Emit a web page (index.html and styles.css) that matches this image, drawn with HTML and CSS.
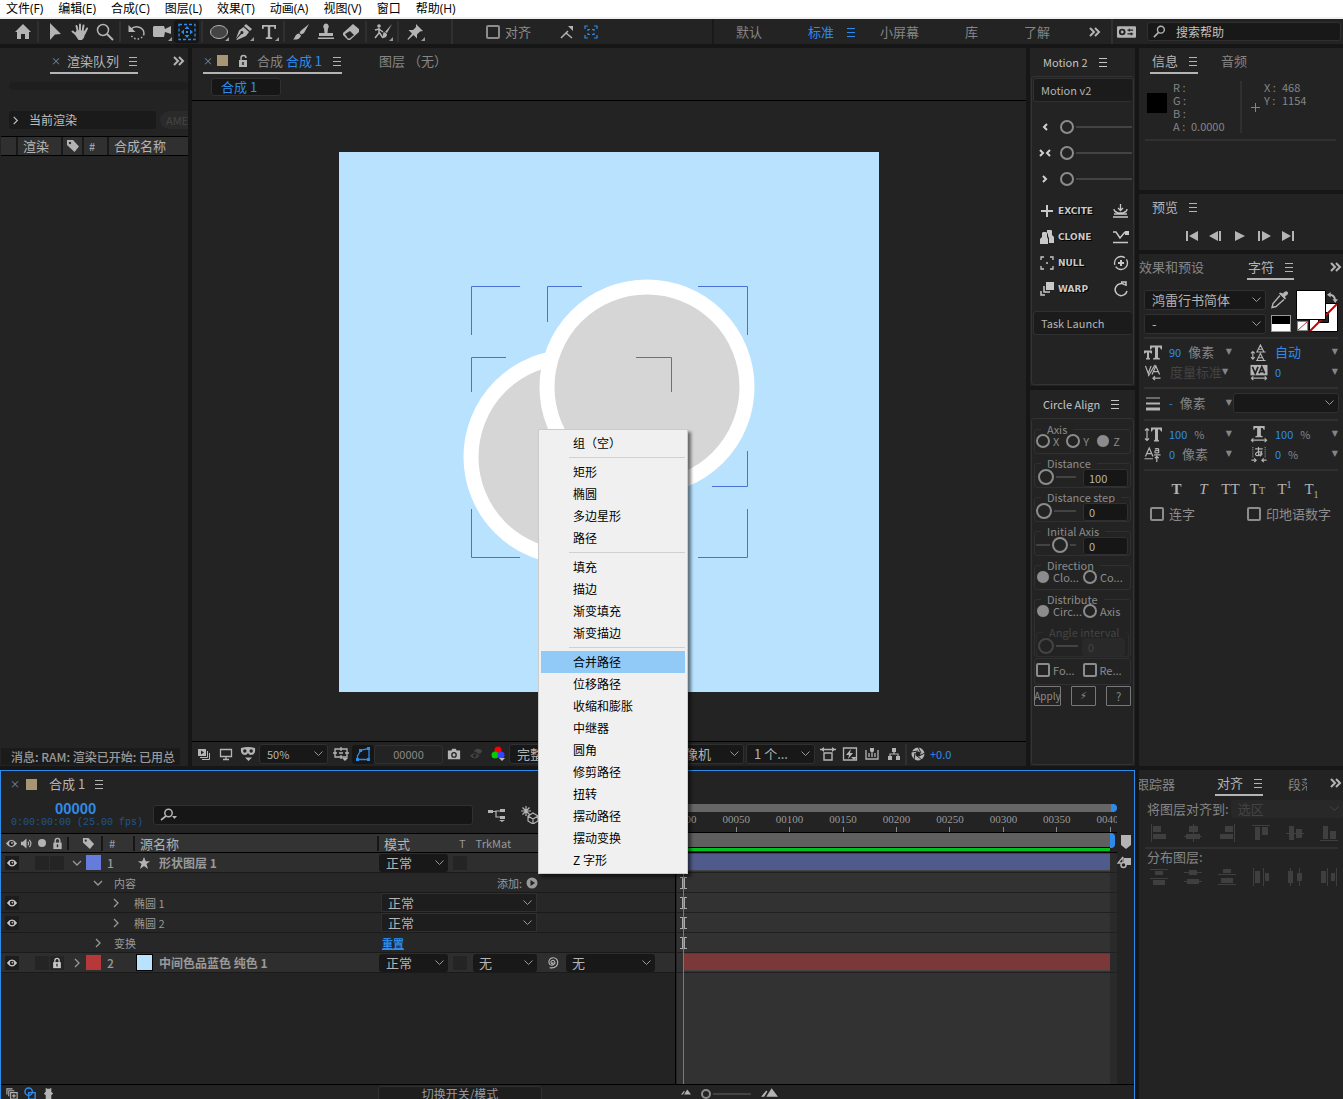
FILE: index.html
```html
<!DOCTYPE html>
<html lang="zh-CN">
<head>
<meta charset="utf-8">
<meta name="viewport" content="width=device-width, initial-scale=1">
<title>合成 1</title>
<link rel="stylesheet" href="styles.css">
</head>
<body>
<svg class="sprite" aria-hidden="true">
  <symbol id="home" viewBox="0 0 20 20"><path fill="currentColor" d="M10 2l8 8h-2v7h-4v-5H8v5H4v-7H2z"/></symbol>
  <symbol id="arrow" viewBox="0 0 20 20"><path fill="currentColor" d="M5 1l11 11-6 .5L5 18z"/></symbol>
  <symbol id="hand" viewBox="0 0 20 20"><path fill="none" stroke="currentColor" stroke-width="2" stroke-linecap="round" d="M6.500 4l1.500 6M10 2.500v7M13.500 3.500L12.500 10M17 6.500l-2.500 5M2.500 9.500L7 13"/><path fill="currentColor" d="M6.500 8.500h8l1 2-1.500 5-2 2.500H8.500L4.500 12z"/></symbol>
  <symbol id="zoom" viewBox="0 0 20 20"><circle cx="8" cy="8" r="5.500" fill="none" stroke="currentColor" stroke-width="1.500"/><path d="M12 12l6 6" stroke="currentColor" stroke-width="2"/></symbol>
  <symbol id="rotate" viewBox="0 0 20 20"><path fill="none" stroke="currentColor" stroke-width="1.500" d="M4 7a7.500 7 0 0 1 13 5"/><path fill="none" stroke="currentColor" stroke-width="1.500" stroke-dasharray="1.500 2" d="M17 12A7 7 0 0 1 4 13"/><path fill="currentColor" d="M1.500 3v7h7z"/></symbol>
  <symbol id="camera" viewBox="0 0 20 20"><path fill="currentColor" d="M2 4h10l1 3 6-3v8l-6-2-1 5H2l-1-1V5z"/></symbol>
  <symbol id="anchor" viewBox="0 0 20 20"><path fill="none" stroke="currentColor" stroke-width="1.300" stroke-dasharray="3 2" d="M2 2.500h16v15H2z"/><path fill="currentColor" d="M10 4l2.500 3h-5zM10 16l2.500-3h-5zM4 10l3-2.500v5zM16 10l-3-2.500v5z"/><path fill="currentColor" d="M9 9h2v2H9z"/></symbol>
  <symbol id="ellipse" viewBox="0 0 20 20"><ellipse cx="10" cy="10" rx="8.500" ry="6.500" fill="#444" stroke="currentColor"/></symbol>
  <symbol id="pen" viewBox="0 0 20 20"><path fill="currentColor" d="M12 2l6 5-2 2-6-5zM9.500 5l5.500 5-3 4-9 4-.7-.7L7.500 12a1.500 1.500 0 1 0-1-1L2 16.500l3-8z"/></symbol>
  <symbol id="type" viewBox="0 0 20 20"><path fill="currentColor" d="M3 3h14v4h-1.500L15 4.800h-3.800V15l2 .5V17H6.800v-1.500l2-.5V4.800H5L4.500 7H3z"/></symbol>
  <symbol id="brush" viewBox="0 0 20 20"><path fill="currentColor" d="M18 2l-5 9-2.500 1.500L8.500 11l1-2zM8 11.500l2 2C9 17 6 18 2 17.500 4 16.500 4 12 8 11.500z"/></symbol>
  <symbol id="stamp" viewBox="0 0 20 20"><path fill="currentColor" d="M10 1.500a3 3 0 0 1 2 5L11.500 11H17v3H3v-3h5.500L8 6.500a3 3 0 0 1 2-5zM2 15.500h16V17H2z"/></symbol>
  <symbol id="eraser" viewBox="0 0 20 20"><path fill="currentColor" d="M12 2l6 5v3l-9 8H7l-5-5v-2z"/><path fill="#232323" d="M4 12l5-3 4 4-4.500 3.500H7z"/></symbol>
  <symbol id="roto" viewBox="0 0 20 20"><circle cx="6" cy="4" r="1.800" fill="currentColor"/><path fill="none" stroke="currentColor" stroke-width="1.500" d="M6 6v5l-4 5M6 10l4 6M2 8l4-1 4 3"/><path fill="currentColor" d="M19 2l-5 9-2-1zM11 10l3 2c0 3-2 4-5 4 2-1 0-4 2-6z"/></symbol>
  <symbol id="pin" viewBox="0 0 20 20"><path fill="currentColor" d="M11 2l7 7-3 .5-3 3v4L8.500 13 3 18l-.5-1 4.500-5.500L3.500 8h4.500l3-3z"/></symbol>
  <symbol id="axis" viewBox="0 0 16 16"><path fill="none" stroke="currentColor" stroke-width="1.500" d="M2 14l5-5 6 5M7 9l2-2"/><path fill="currentColor" d="M9 2h5v5z"/></symbol>
  <symbol id="focus" viewBox="0 0 16 16"><path fill="none" stroke="currentColor" stroke-width="1.200" d="M2 5V2h3M11 2h3v3M14 11v3h-3M5 14H2v-3M5 7V5.500h2M9 5.500h2V7M11 9v1.500H9M7 10.500H5V9"/></symbol>
  <symbol id="menu" viewBox="0 0 10 10"><path fill="none" stroke="currentColor" d="M1 1.500h8M1 5.500h8M1 9.500h8"/></symbol>
  <symbol id="more" viewBox="0 0 12 10"><path fill="none" stroke="currentColor" stroke-width="2" d="M1 1l4 4-4 4M6 1l4 4-4 4"/></symbol>
  <symbol id="prefs" viewBox="0 0 20 12"><rect width="20" height="12" rx="1" fill="currentColor"/><circle cx="5.500" cy="6" r="2.500" fill="none" stroke="#232323" stroke-width="2"/><path stroke="#232323" stroke-width="1.300" d="M11 4h6M11 8h6M13 2.500v3M15 6.500v3"/></symbol>
  <symbol id="search" viewBox="0 0 14 14"><circle cx="8.500" cy="5" r="3.700" fill="none" stroke="currentColor" stroke-width="1.500"/><path d="M6 8l-5 5" stroke="currentColor" stroke-width="1.700"/></symbol>
  <symbol id="searchmenu" viewBox="0 0 18 14"><circle cx="8.500" cy="5" r="3.700" fill="none" stroke="currentColor" stroke-width="1.500"/><path d="M6 8l-5 4" stroke="currentColor" stroke-width="1.700"/><path fill="currentColor" d="M12 8h5l-2.500 3z"/></symbol>
  <symbol id="lock" viewBox="0 0 12 14"><path fill="none" stroke="currentColor" stroke-width="1.500" d="M3.500 7V4a2.500 2.500 0 0 1 5 0v3"/><path fill="currentColor" d="M1.500 6h9v7h-9z"/><path d="M6 8v3" stroke="#232323" stroke-width="1.500"/></symbol>
  <symbol id="unlock" viewBox="0 0 12 14"><path fill="none" stroke="currentColor" stroke-width="1.500" d="M4 7V4a2.500 2.500 0 0 1 5 0"/><path fill="currentColor" d="M2 6h8v7H2z"/><path d="M6 8v3" stroke="#232323" stroke-width="1.500"/></symbol>
  <symbol id="tag" viewBox="0 0 14 14"><path fill="currentColor" d="M1 1h6l6 6.500L8.500 13 1 6z"/><circle cx="4" cy="4" r="1.200" fill="#333"/></symbol>
  <symbol id="right" viewBox="0 0 10 10"><path fill="none" stroke="currentColor" stroke-width="1.300" d="M3 1l4 4-4 4"/></symbol>
  <symbol id="down" viewBox="0 0 10 10"><path fill="none" stroke="currentColor" stroke-width="1.300" d="M1 3l4 4 4-4"/></symbol>
  <symbol id="eye" viewBox="0 0 14 10"><path fill="currentColor" d="M1 5q6-8 12 0-6 8-12 0z"/><circle cx="7" cy="5" r="2.600" fill="#1d1d1d"/><circle cx="7.500" cy="4.500" r="1" fill="currentColor"/></symbol>
  <symbol id="ghost" viewBox="0 0 16 14"><path fill="currentColor" d="M1 9q5-6 11 0-5 6-11 0zM6 3q4-4 9 0-1 4-4 4-2-3-5-3z"/><circle cx="6.500" cy="9" r="2" fill="#232323"/></symbol>
  <symbol id="sound" viewBox="0 0 14 12"><path fill="currentColor" d="M1 4h2l4-3.500v11L3 8H1z"/><path fill="none" stroke="currentColor" stroke-width="1.200" d="M8.500 4q1.500 2 0 4M10 2q3.500 4 0 8"/></symbol>
  <symbol id="frames" viewBox="0 0 14 14"><path fill="currentColor" d="M1 2h8v7H1z"/><path fill="#232323" d="M4 3.500L7 5.500 4 7.500z"/><path fill="none" stroke="currentColor" d="M3 10.500h7.500V4M5 12.500h7.500V6"/></symbol>
  <symbol id="screen" viewBox="0 0 14 14"><path fill="none" stroke="currentColor" stroke-width="1.300" d="M1.500 2.500h11v7h-11zM7 10v2M4 12.500h6"/></symbol>
  <symbol id="mask" viewBox="0 0 16 16"><path fill="currentColor" d="M1 2q7-2 14 0 1 7-4 7-2 0-3-2-1 2-3 2-5 0-4-7zM5 11.500h7L8.500 15z"/><circle cx="4.800" cy="5" r="1.700" fill="#232323"/><circle cx="11.200" cy="5" r="1.700" fill="#232323"/></symbol>
  <symbol id="grid" viewBox="0 0 16 16"><path fill="none" stroke="currentColor" stroke-width="1.300" d="M2 3h12v8H2zM8 1v4M8 9v4M0 7h4M12 7h4M6 7h4"/><path fill="currentColor" d="M9 12h6l-3 3z"/></symbol>
  <symbol id="region" viewBox="0 0 16 16"><path fill="none" stroke="currentColor" stroke-width="1.300" d="M2.500 13.500V10L6 4l8-1.500v11z"/><path fill="currentColor" d="M1 12h3v3H1zM12 12h3v3h-3zM12 1h3v3h-3zM4 3h3v3H4z"/></symbol>
  <symbol id="snapshot" viewBox="0 0 16 14"><path fill="currentColor" d="M1 3h4l1-2h4l1 2h4v10H1z"/><circle cx="8" cy="8" r="2.500" fill="none" stroke="#232323" stroke-width="1.500"/></symbol>
  <symbol id="rgb" viewBox="0 0 14 16"><circle cx="7" cy="4" r="3.500" fill="#f00"/><circle cx="4" cy="9" r="3.500" fill="#0c0"/><circle cx="10" cy="9" r="3.500" fill="#34f"/><path fill="#bbb" d="M8 12h6l-3 3z"/></symbol>
  <symbol id="aspect" viewBox="0 0 16 14"><path fill="none" stroke="currentColor" stroke-width="1.400" d="M0 2.500h16M4 6h8v7H4z"/><path fill="currentColor" d="M4 0v5L1 2.500zM12 0v5l3-2.500z"/></symbol>
  <symbol id="fast" viewBox="0 0 16 14"><path fill="none" stroke="currentColor" stroke-width="1.300" d="M1.500 1h13v12h-13z"/><path fill="currentColor" d="M9 2L4 8h3l-1 4 5-6H8zM9 10h6l-3 3z"/></symbol>
  <symbol id="timeicon" viewBox="0 0 14 14"><path fill="none" stroke="currentColor" stroke-width="1.300" d="M1 3v9h12V3M4 6v4M7 6v4M10 6v4"/><path fill="currentColor" d="M5 1h4v3l-2 2-2-2z"/></symbol>
  <symbol id="flow" viewBox="0 0 14 14"><path fill="currentColor" d="M5 1h4v4H5zM1 9h4v4H1zM9 9h4v4H9z"/><path fill="none" stroke="currentColor" stroke-width="1.200" d="M7 5v2M3 9V7h8v2"/></symbol>
  <symbol id="shutter" viewBox="0 0 14 14"><circle cx="7" cy="7" r="4.500" fill="none" stroke="currentColor" stroke-width="4"/><path stroke="#232323" d="M7 0l3 6M14 6l-6 3M11 13L6 9M3 13l1-7M0 5l7-1"/></symbol>
  <symbol id="ease" viewBox="0 0 18 16"><path fill="none" stroke="currentColor" stroke-width="1.300" d="M1 14h15M2 11h13M8.500 1v6M6 5l2.500 2.500L11 5M3 8q5.500 5 11 0M2 6q0 4 6.500 4T15 6"/></symbol>
  <symbol id="bounce" viewBox="0 0 18 16"><path fill="none" stroke="currentColor" stroke-width="1.500" d="M1 3h3l4 6 5-6M1 13.500h15"/><path fill="currentColor" d="M13 2h4v4h-4z"/></symbol>
  <symbol id="orbit" viewBox="0 0 18 16"><circle cx="9" cy="8" r="6.500" fill="none" stroke="currentColor" stroke-width="1.300" stroke-dasharray="16 2"/><path stroke="currentColor" stroke-width="2" d="M9 5v6M6 8h6"/></symbol>
  <symbol id="spin" viewBox="0 0 18 16"><path fill="none" stroke="currentColor" stroke-width="1.500" d="M13 4a6 6 0 1 0 2 6M9 1h5v4"/></symbol>
  <symbol id="plus" viewBox="0 0 14 14"><path stroke="currentColor" stroke-width="2" d="M7 1v12M1 7h12"/></symbol>
  <symbol id="cross" viewBox="0 0 10 10"><path stroke="currentColor" d="M4.500 0v9M0 4.500h9"/></symbol>
  <symbol id="clone" viewBox="0 0 14 14"><path fill="currentColor" d="M7 0h4q1 0 1 1v4l2 2v6H9V8L8 6V4L7 3z"/><path fill="currentColor" d="M3 2h3l1 1v4l1 2v5H0V9l2-2V3z"/></symbol>
  <symbol id="null" viewBox="0 0 14 14"><path fill="none" stroke="currentColor" stroke-width="1.300" d="M1 4V1h3M10 1h3v3M13 10v3h-3M4 13H1v-3M6 7h2"/></symbol>
  <symbol id="warp" viewBox="0 0 14 14"><path fill="currentColor" d="M6 0h8v8H6z"/><path fill="none" stroke="currentColor" stroke-width="1.500" d="M4 4v6h6M1 9v4h4"/></symbol>
  <symbol id="inL" viewBox="0 0 12 12"><path fill="none" stroke="currentColor" stroke-width="2" d="M8 3L5 6l3 3"/></symbol>
  <symbol id="inM" viewBox="0 0 12 12"><path fill="none" stroke="currentColor" stroke-width="2" d="M1 3l3 3-3 3M11 3L8 6l3 3"/></symbol>
  <symbol id="inR" viewBox="0 0 12 12"><path fill="none" stroke="currentColor" stroke-width="2" d="M4 3l3 3-3 3"/></symbol>
  <symbol id="first" viewBox="0 0 14 10"><path fill="currentColor" d="M1 0h2v10H1zM13 0v10L4 5z"/></symbol>
  <symbol id="prev" viewBox="0 0 14 10"><path fill="currentColor" d="M10 0h2v10h-2zM9 0v10L0 5z"/></symbol>
  <symbol id="play" viewBox="0 0 14 10"><path fill="currentColor" d="M2 0l10 5-10 5z"/></symbol>
  <symbol id="next" viewBox="0 0 14 10"><path fill="currentColor" d="M1 0h2v10H1zM5 0l9 5-9 5z"/></symbol>
  <symbol id="last" viewBox="0 0 14 10"><path fill="currentColor" d="M11 0h2v10h-2zM1 0l9 5-9 5z"/></symbol>
  <symbol id="dropper" viewBox="0 0 18 18"><path fill="currentColor" d="M12 3q3-4 5-1 1 2-3 4l1 2-1 1-6-6 1-1z"/><path fill="none" stroke="currentColor" stroke-width="1.400" d="M9 5l-7 8-1 4 4-1 8-7"/></symbol>
  <symbol id="swap" viewBox="0 0 12 12"><path fill="none" stroke="currentColor" stroke-width="2" d="M3 3q5 0 6 6"/><path fill="currentColor" d="M4 0v6L0 3zM6 8h6l-3 4z"/></symbol>
  <symbol id="size" viewBox="0 0 18 16"><path fill="currentColor" d="M6 1h12v4h-1l-1-2h-2v10l2 1v1H9v-1l2-1V3H8L7 5H6zM0 6h8v3H7L6 8H5v5l1 1v1H2v-1l1-1V8H2L1 9H0z"/></symbol>
  <symbol id="leading" viewBox="0 0 18 18"><path fill="none" stroke="currentColor" stroke-width="1.200" d="M7 8l3.500-7L14 8M8.500 5.500h4M7 17l3.500-7L14 17M8.500 14.500h4M6 8.500h10M6 17.500h10M2.500 8v8M.500 10l2-2 2 2M.500 14l2 2 2-2"/></symbol>
  <symbol id="kern" viewBox="0 0 18 18"><path fill="none" stroke="currentColor" stroke-width="1.300" d="M1 2l3 8 3-8M4 13L11 1M8 11l4-9 4 9M10 8h5M9 15h8M11 13l-2 2 2 2"/></symbol>
  <symbol id="track" viewBox="0 0 18 18"><path fill="currentColor" d="M0 1h18v11H0z"/><path fill="none" stroke="#232323" stroke-width="1.800" d="M2 3l3 7 3-7M9 10l3-7 3 7M10 8h5"/><path fill="none" stroke="currentColor" stroke-width="1.200" d="M1 15h16M3 13l-2 2 2 2M15 13l2 2-2 2"/></symbol>
  <symbol id="lines" viewBox="0 0 18 16"><path fill="currentColor" d="M2 2h14v1H2zM2 7h14v2H2zM2 12h14v3H2z"/></symbol>
  <symbol id="vscale" viewBox="0 0 18 16"><path fill="currentColor" d="M7 1h11v4h-1l-1-2h-2v10l1 1v1h-5v-1l1-1V3H9L8 5H7z"/><path fill="none" stroke="currentColor" stroke-width="1.200" d="M3 2v12M1 4l2-2 2 2M1 12l2 2 2-2"/></symbol>
  <symbol id="hscale" viewBox="0 0 18 18"><path fill="currentColor" d="M3 0h12v4h-1l-1-2h-2v8l2 1v1H5v-1l2-1V2H5L4 4H3z"/><path fill="none" stroke="currentColor" stroke-width="1.200" d="M1 15h16M3 13l-2 2 2 2M15 13l2 2-2 2"/></symbol>
  <symbol id="baseline" viewBox="0 0 18 18"><path fill="none" stroke="currentColor" stroke-width="1.300" d="M1 11l4-9 4 9M3 8h5M0 13.500h9M11 3q4-1 4 1v3q-4 1-4-1t4-1M10 9.500h7M13 17v-6M11 13l2-2 2 2"/></symbol>
  <symbol id="tsume" viewBox="0 0 18 18"><path fill="none" stroke="currentColor" stroke-dasharray="1 1" d="M2.500 1v11M15.500 1v11"/><path fill="none" stroke="currentColor" stroke-width="1.200" d="M5 3h8M8.500 1v9M12 5q-1 6-6 5-2-2 2-4 5 0 4 3l-2 2M1 15h5M4 13l2 2-2 2M17 15h-5M14 13l-2 2 2 2"/></symbol>
  <symbol id="tree" viewBox="0 0 18 14"><path fill="currentColor" d="M0 2h5v3H0zM12 1h5v3h-5zM12 8h5v3h-5zM11 12h6l-3 2z"/><path fill="none" stroke="currentColor" stroke-width="1.200" d="M4 3.500h4M12 3H8v6h4"/></symbol>
  <symbol id="draft" viewBox="0 0 18 18"><path fill="none" stroke="currentColor" stroke-width="1.200" d="M5 0v10M0 5h10M1.500 1.500l7 7M8.500 1.500l-7 7M7 10l5-3 5 3v5l-5 3-5-3zM7 10l5 3 5-3M12 13v5"/></symbol>
  <symbol id="star" viewBox="0 0 14 14"><path fill="currentColor" d="M7 1l1.700 4.300H13L9.500 8l1.500 5-4-3-4 3 1.500-5L1 5.300h4.300z"/></symbol>
  <symbol id="add" viewBox="0 0 12 12"><circle cx="6" cy="6" r="5.500" fill="currentColor"/><path fill="#232323" d="M4.500 3L9 6l-4.500 3z"/></symbol>
  <symbol id="spiral" viewBox="0 0 14 14"><path fill="none" stroke="currentColor" stroke-width="1.200" d="M8 7q-2 2-2.500 0T7.500 4.500Q10 5 9.500 8 7 11 4 9 2 6 4.500 3 8 .5 11.500 3.500q2.500 4-.5 7.500-3 2.500-7 1.500"/></symbol>
  <symbol id="marker" viewBox="0 0 12 14"><path fill="currentColor" d="M1 0h10v10l-5 4-5-4z"/></symbol>
  <symbol id="graph" viewBox="0 0 14 14"><path fill="currentColor" d="M7 2h7v7H7z"/><path fill="none" stroke="currentColor" stroke-width="1.300" d="M6 1L1 7h3M6 1v8"/><circle cx="6.500" cy="9" r="2.500" fill="#232323" stroke="currentColor" stroke-width="1.500"/></symbol>
  <symbol id="ibeam" viewBox="0 0 9 12"><path fill="none" stroke="currentColor" d="M1 .5h7M1 11.500h7M3.500 1v10M5.500 1v10"/></symbol>
  <symbol id="stack" viewBox="0 0 14 14"><path fill="none" stroke="currentColor" stroke-width="1.200" d="M1 8V2h6M3 10V4h6M5 6h7v7H5zM8.500 7.500v4M6.500 9.500h4"/></symbol>
  <symbol id="shapes" viewBox="0 0 14 14"><circle cx="5" cy="5" r="4" fill="none" stroke="currentColor" stroke-width="1.500"/><path fill="none" stroke="currentColor" stroke-width="1.500" d="M5 6h7v7H5z"/></symbol>
  <symbol id="braces" viewBox="0 0 14 14"><path fill="currentColor" d="M5 1H4v4L2 7l2 2v4h1zM9 1h1v4l2 2-2 2v4H9zM5 2h4v11H5z"/></symbol>
  <symbol id="hills" viewBox="0 0 16 10"><path fill="currentColor" d="M5 9l5-8 6 8zM0 9l5-6 1 1-3 5z"/></symbol>
  <symbol id="alL" viewBox="0 0 18 18"><path fill="currentColor" d="M1 0h1v18H1zM3 2h8v6H3zM3 10h13v5H3z"/></symbol>
  <symbol id="alC" viewBox="0 0 18 18"><path fill="currentColor" d="M9 0h1v18H9zM5 2h9v6H5zM2 10h14v5H2zM0 12h18v1H0z"/></symbol>
  <symbol id="alR" viewBox="0 0 18 18"><path fill="currentColor" d="M16 0h1v18h-1zM7 2h8v6H7zM2 10h13v5H2z"/></symbol>
  <symbol id="alT" viewBox="0 0 18 18"><path fill="currentColor" d="M0 1h18v1H0zM3 3h5v13H3zM10 3h6v8h-6z"/></symbol>
  <symbol id="alM" viewBox="0 0 18 18"><path fill="currentColor" d="M0 9h18v1H0zM3 2h5v14H3zM10 5h6v9h-6z"/></symbol>
  <symbol id="alB" viewBox="0 0 18 18"><path fill="currentColor" d="M0 16h18v1H0zM3 2h5v13H3zM10 7h6v8h-6z"/></symbol>
  <symbol id="diT" viewBox="0 0 18 18"><path fill="currentColor" d="M0 1h18v1H0zM5 3h8v4H5zM0 10h18v1H0zM3 12h12v5H3z"/></symbol>
  <symbol id="diC" viewBox="0 0 18 18"><path fill="currentColor" d="M0 4h18v1H0zM5 2h8v5H5zM0 13h18v1H0zM3 11h12v5H3z"/></symbol>
  <symbol id="diB" viewBox="0 0 18 18"><path fill="currentColor" d="M0 6h18v1H0zM5 1h8v4H5zM0 16h18v1H0zM3 10h12v5H3z"/></symbol>
  <symbol id="dhL" viewBox="0 0 18 18"><path fill="currentColor" d="M1 0h1v18H1zM3 3h5v12H3zM11 0h1v18h-1zM13 5h4v8h-4z"/></symbol>
  <symbol id="dhC" viewBox="0 0 18 18"><path fill="currentColor" d="M4 0h1v18H4zM2 3h5v12H2zM13 0h1v18h-1zM11 5h5v8h-5z"/></symbol>
  <symbol id="dhR" viewBox="0 0 18 18"><path fill="currentColor" d="M7 0h1v18H7zM1 3h5v12H1zM16 0h1v18h-1zM11 5h4v8h-4z"/></symbol>
</svg>

<nav class="menubar" aria-label="主菜单">
  <button>文件(F)</button><button>编辑(E)</button><button>合成(C)</button><button>图层(L)</button><button>效果(T)</button><button>动画(A)</button><button>视图(V)</button><button>窗口</button><button>帮助(H)</button>
</nav>

<header class="toolbar">
  <div class="tools">
    <button class="tool" aria-label="主页"><svg><use href="#home"/></svg></button><i class="sep"></i>
    <button class="tool" aria-label="选取"><svg><use href="#arrow"/></svg></button>
    <button class="tool" aria-label="手形"><svg><use href="#hand"/></svg></button>
    <button class="tool" aria-label="缩放"><svg><use href="#zoom"/></svg></button><i class="sep"></i>
    <button class="tool" aria-label="旋转"><svg><use href="#rotate"/></svg></button>
    <button class="tool corner" aria-label="摄像机"><svg><use href="#camera"/></svg></button>
    <button class="tool active" aria-label="锚点"><svg><use href="#anchor"/></svg></button><i class="sep"></i>
    <button class="tool corner" aria-label="椭圆"><svg><use href="#ellipse"/></svg></button>
    <button class="tool corner" aria-label="钢笔"><svg><use href="#pen"/></svg></button>
    <button class="tool corner" aria-label="文字"><svg><use href="#type"/></svg></button><i class="sep"></i>
    <button class="tool" aria-label="画笔"><svg><use href="#brush"/></svg></button>
    <button class="tool" aria-label="仿制图章"><svg><use href="#stamp"/></svg></button>
    <button class="tool" aria-label="橡皮擦"><svg><use href="#eraser"/></svg></button><i class="sep"></i>
    <button class="tool corner" aria-label="Roto 笔刷"><svg><use href="#roto"/></svg></button><i class="sep"></i>
    <button class="tool corner" aria-label="人偶位控点"><svg><use href="#pin"/></svg></button>
  </div>
  <div class="snap">
    <label class="check"><input type="checkbox">对齐</label>
    <button class="ico16" aria-label="轴"><svg><use href="#axis"/></svg></button>
    <button class="ico16 blue" aria-label="边界"><svg><use href="#focus"/></svg></button>
  </div>
  <div class="spaces">
    <button>默认</button>
    <button class="blue">标准<svg class="burger"><use href="#menu"/></svg></button>
    <button>小屏幕</button>
    <button>库</button>
    <button>了解</button>
    <button class="light" aria-label="更多"><svg class="more"><use href="#more"/></svg></button>
  </div>
  <button class="prefs" aria-label="工作区设置"><svg><use href="#prefs"/></svg></button>
  <label class="help"><svg><use href="#search"/></svg><input type="text" placeholder="搜索帮助" aria-label="搜索帮助"></label>
</header>

<main class="workspace">
  <div class="main">
    <div class="upper">
      <section class="panel queue">
        <div class="tabs">
          <div class="tab on"><span class="x">×</span><span>渲染队列</span><svg class="burger"><use href="#menu"/></svg></div>
          <svg class="more"><use href="#more"/></svg>
        </div>
        <div class="progress"></div>
        <div class="current"><button class="now"><svg><use href="#right"/></svg>当前渲染</button><button class="ame" disabled>AME</button></div>
        <table class="qtable"><thead><tr><td class="c0"></td><th class="c1">渲染</th><th class="c2"><svg><use href="#tag"/></svg></th><th class="c3">#</th><th>合成名称</th></tr></thead></table>
        <div class="message">消息: RAM: 渲染已开始: 已用总</div>
      </section>

      <section class="panel comp">
        <div class="tabs">
          <div class="tab on"><span class="x">×</span><i class="sw tan"></i><svg class="ulock"><use href="#unlock"/></svg><span class="dim">合成 <b>合成 1</b></span><svg class="burger"><use href="#menu"/></svg></div>
          <div class="tab dim">图层 （无）</div>
        </div>
        <div class="crumb"><button>合成 1</button></div>
        <div class="viewer">
          <svg class="stage" viewBox="0 0 540 540">
            <path fill="#b9e2ff" d="M0 0h540v540H0z"/>
            <g fill="#d6d6d6" stroke="#fff" stroke-width="15"><circle cx="232" cy="305" r="100"/><circle cx="308" cy="235" r="100"/></g>
            <path fill="none" stroke="#4873d4" d="M132.500 183v-48.500H181M359 134.500h49.500V183M408.500 357v48.500H359M181 405.500h-48.500V357M208.500 170v-35.500H243M408.500 299v35.500H373M132.500 240v-34.500H167M297 205.500h35.500V240"/>
          </svg>
        </div>
        <div class="viewbar">
          <button aria-label="始终预览"><svg><use href="#frames"/></svg></button>
          <button aria-label="主视图"><svg><use href="#screen"/></svg></button>
          <button aria-label="蒙版"><svg class="w16"><use href="#mask"/></svg></button>
          <select class="w69 num-sel" aria-label="放大率"><option>50%</option></select>
          <button aria-label="网格"><svg class="w16"><use href="#grid"/></svg></button>
          <button class="boxed blue" aria-label="目标区域"><svg class="w16"><use href="#region"/></svg></button>
          <button class="frame">00000</button>
          <button aria-label="快照"><svg><use href="#snapshot"/></svg></button>
          <button class="faint" aria-label="显示快照"><svg><use href="#ghost"/></svg></button>
          <button aria-label="通道"><svg class="w16"><use href="#rgb"/></svg></button>
          <select class="wres" aria-label="分辨率"><option>完整</option></select>
          <select class="wcam" aria-label="3D 视图"><option>活动摄像机</option></select>
          <select class="w69" aria-label="视图布局"><option>1 个...</option></select>
          <button aria-label="像素长宽比"><svg class="w16"><use href="#aspect"/></svg></button>
          <button aria-label="快速预览"><svg class="w16"><use href="#fast"/></svg></button>
          <button aria-label="时间轴"><svg><use href="#timeicon"/></svg></button>
          <button aria-label="流程图"><svg><use href="#flow"/></svg></button>
          <i class="sep"></i>
          <button aria-label="曝光"><svg><use href="#shutter"/></svg></button>
          <span class="expo">+0.0</span>
        </div>
      </section>

      <div class="scripts">
        <section class="panel motion">
          <h2>Motion 2<svg class="burger"><use href="#menu"/></svg></h2>
          <div class="group">
            <button class="bar">Motion v2</button>
            <label class="slide"><svg><use href="#inL"/></svg><input type="range" value="0" aria-label="缓入"></label>
            <label class="slide"><svg><use href="#inM"/></svg><input type="range" value="0" aria-label="缓动"></label>
            <label class="slide"><svg><use href="#inR"/></svg><input type="range" value="0" aria-label="缓出"></label>
            <div class="acts">
              <button><svg><use href="#plus"/></svg>EXCITE</button><button aria-label="混合"><svg class="wide"><use href="#ease"/></svg></button>
              <button><svg><use href="#clone"/></svg>CLONE</button><button aria-label="跳跃"><svg class="wide"><use href="#bounce"/></svg></button>
              <button><svg><use href="#null"/></svg>NULL</button><button aria-label="轨道"><svg class="wide"><use href="#orbit"/></svg></button>
              <button><svg><use href="#warp"/></svg>WARP</button><button aria-label="旋转"><svg class="wide"><use href="#spin"/></svg></button>
            </div>
            <button class="bar">Task Launch</button>
          </div>
        </section>
        <section class="panel align-circle">
          <h2>Circle Align<svg class="burger"><use href="#menu"/></svg></h2>
          <div class="group">
            <fieldset><legend>Axis</legend><label><input type="radio" name="ax">X</label><label><input type="radio" name="ax">Y</label><label><input type="radio" name="ax" checked>Z</label></fieldset>
            <fieldset><legend>Distance</legend><input type="range" value="10" aria-label="Distance"><input type="text" value="100" aria-label="Distance"></fieldset>
            <fieldset><legend>Distance step</legend><input type="range" value="0" aria-label="Distance step"><input type="text" value="0" aria-label="Distance step"></fieldset>
            <fieldset><legend>Initial Axis</legend><input type="range" value="65" aria-label="Initial Axis"><input type="text" value="0" aria-label="Initial Axis"></fieldset>
            <fieldset class="two"><legend>Direction</legend><label><input type="radio" name="dir" checked>Clo...</label><label><input type="radio" name="dir">Co...</label></fieldset>
            <fieldset class="two tall"><legend>Distribute</legend><label><input type="radio" name="dis" checked>Circ...</label><label><input type="radio" name="dis">Axis</label>
              <fieldset class="inner" disabled><legend>Angle interval</legend><input type="range" value="0" aria-label="Angle interval"><input type="text" value="0" aria-label="Angle interval"></fieldset>
            </fieldset>
            <div class="pair"><label><input type="checkbox">Fo...</label><label><input type="checkbox">Re...</label></div>
            <div class="go"><button>Apply</button><button class="sym">⚡&#xFE0E;</button><button>?</button></div>
          </div>
        </section>
      </div>
    </div>

    <section class="timeline">
      <div class="tbody">
        <div class="tleft">
          <div class="ttab"><span class="x">×</span><i class="sw tan"></i><span>合成 1</span><svg class="burger"><use href="#menu"/></svg></div>
          <div class="ttop">
            <div class="time"><strong>00000</strong><small>0:00:00:00 (25.00 fps)</small></div>
            <label class="tsearch"><svg><use href="#searchmenu"/></svg><input type="text" aria-label="搜索图层"></label>
            <button class="i18" aria-label="微型流程图"><svg><use href="#tree"/></svg></button>
            <button class="i18" aria-label="草图 3D"><svg><use href="#draft"/></svg></button>
          </div>
          <div class="row head">
            <span class="av"><svg><use href="#eye"/></svg><svg><use href="#sound"/></svg><i class="dot"></i><svg><use href="#lock"/></svg></span>
            <span class="htag"><svg><use href="#tag"/></svg></span><span class="num bl">#</span><span class="hname bl">源名称</span><span class="bl">模式</span><span class="tcol">T</span><span>TrkMat</span>
          </div>
          <div class="row layer">
            <span class="av"><i class="cell"><svg><use href="#eye"/></svg></i><i class="cell off"></i><i class="cell"></i></span>
            <svg class="tw"><use href="#down"/></svg><i class="sw violet"></i><span class="num">1</span><svg class="li"><use href="#star"/></svg><span class="name">形状图层 1</span>
            <select aria-label="模式"><option>正常</option></select><i class="cell t"></i>
          </div>
          <div class="row sub"><span class="av"></span><svg class="tw d1"><use href="#down"/></svg><span class="prop">内容</span><span class="adder">添加:<button aria-label="添加"><svg><use href="#add"/></svg></button></span></div>
          <div class="row sub"><span class="av"><i class="cell"><svg><use href="#eye"/></svg></i></span><svg class="tw d2"><use href="#right"/></svg><span class="prop">椭圆 1</span><select class="long" aria-label="椭圆 1 模式"><option>正常</option></select></div>
          <div class="row sub"><span class="av"><i class="cell"><svg><use href="#eye"/></svg></i></span><svg class="tw d2"><use href="#right"/></svg><span class="prop">椭圆 2</span><select class="long" aria-label="椭圆 2 模式"><option>正常</option></select></div>
          <div class="row sub"><span class="av"></span><svg class="tw d1"><use href="#right"/></svg><span class="prop">变换</span><a class="reset" href="#reset">重置</a></div>
          <div class="row layer">
            <span class="av"><i class="cell"><svg><use href="#eye"/></svg></i><i class="cell off"></i><i class="cell"><svg><use href="#lock"/></svg></i></span>
            <svg class="tw"><use href="#right"/></svg><i class="sw red"></i><span class="num">2</span><i class="sw sky"></i><span class="name">中间色品蓝色 纯色 1</span>
            <select aria-label="模式"><option>正常</option></select><i class="cell t"></i><select aria-label="轨道遮罩"><option>无</option></select><svg class="spiral"><use href="#spiral"/></svg><select aria-label="父级"><option>无</option></select>
          </div>
        </div>
        <div class="tright">
          <div class="nav"><i></i></div>
          <div class="ruler"><span>00000</span><span>00050</span><span>00100</span><span>00150</span><span>00200</span><span>00250</span><span>00300</span><span>00350</span><span>00400</span></div>
          <div class="work"><i></i><b></b></div>
          <div class="tracks">
            <div class="track"><i class="clip violet"></i></div>
            <div class="track"><svg><use href="#ibeam"/></svg></div>
            <div class="track"><svg><use href="#ibeam"/></svg></div>
            <div class="track"><svg><use href="#ibeam"/></svg></div>
            <div class="track"><svg><use href="#ibeam"/></svg></div>
            <div class="track"><i class="clip red"></i></div>
            <div class="playhead"></div>
          </div>
        </div>
        <div class="gutter"><svg><use href="#marker"/></svg><svg><use href="#graph"/></svg></div>
      </div>
      <div class="tfoot">
        <button aria-label="图层开关"><svg><use href="#stack"/></svg></button>
        <button class="blue" aria-label="转换控制"><svg><use href="#shapes"/></svg></button>
        <button aria-label="入出点"><svg><use href="#braces"/></svg></button>
        <button class="modes">切换开关/模式</button>
        <svg class="small"><use href="#hills"/></svg><input type="range" value="0" aria-label="时间缩放"><svg class="big"><use href="#hills"/></svg>
      </div>
    </section>
  </div>

  <aside class="side">
    <section class="panel info">
      <div class="tabs"><div class="tab on"><span>信息</span><svg class="burger"><use href="#menu"/></svg></div><div class="tab dim">音频</div></div>
      <div class="infobody">
        <i class="blk"></i>
        <dl><dt>R :</dt><dd></dd><dt>G :</dt><dd></dd><dt>B :</dt><dd></dd><dt>A :</dt><dd>0.0000</dd></dl>
        <svg class="cross"><use href="#cross"/></svg>
        <dl><dt>X :</dt><dd>468</dd><dt>Y :</dt><dd>1154</dd></dl>
      </div>
    </section>
    <section class="panel preview">
      <div class="tabs"><div class="tab"><span>预览</span><svg class="burger"><use href="#menu"/></svg></div></div>
      <div class="transport">
        <button aria-label="第一帧"><svg><use href="#first"/></svg></button><button aria-label="上一帧"><svg><use href="#prev"/></svg></button><button aria-label="播放"><svg><use href="#play"/></svg></button><button aria-label="下一帧"><svg><use href="#next"/></svg></button><button aria-label="最后一帧"><svg><use href="#last"/></svg></button>
      </div>
    </section>
    <section class="panel char">
      <div class="tabs"><div class="tab dim">效果和预设</div><div class="tab on"><span>字符</span><svg class="burger"><use href="#menu"/></svg></div><svg class="more"><use href="#more"/></svg></div>
      <div class="fonts">
        <div class="fsel"><select aria-label="字体"><option>鸿雷行书简体</option></select><select aria-label="样式"><option>-</option></select></div>
        <div class="fmid"><button aria-label="吸管"><svg><use href="#dropper"/></svg></button><i class="bw"></i></div>
        <svg class="paint" viewBox="0 0 43 43"><path fill="#fff" stroke="#000" d="M13.500 13.500h28v28h-28z"/><path fill="#232323" stroke="#000" d="M22.500 22.500h10v10h-10z"/><path stroke="#c00" stroke-width="2" d="M14 41l27-27"/><path fill="#fff" stroke="#000" d="M.500 .500h29v29h-29z"/><path fill="#fff" stroke="#888" d="M1.500 31.500h10v9h-10z"/><path stroke="#c33" d="M2 40l9-8"/><use href="#swap" x="31" y="2" width="11" height="11"/></svg>
      </div>
      <div class="nums">
        <span><svg><use href="#size"/></svg><b>90</b>像素<em>▼</em></span><span><svg><use href="#leading"/></svg><b class="han">自动</b><em>▼</em></span>
        <span class="off"><svg><use href="#kern"/></svg>度量标准<em>▼</em></span><span><svg><use href="#track"/></svg><b>0</b><em>▼</em></span>
      </div>
      <div class="nums one"><span><svg><use href="#lines"/></svg><b>-</b>像素<em>▼</em></span><select aria-label="描边方式"><option></option></select></div>
      <div class="nums">
        <span><svg><use href="#vscale"/></svg><b>100</b><small>%</small><em>▼</em></span><span><svg><use href="#hscale"/></svg><b>100</b><small>%</small><em>▼</em></span>
        <span><svg><use href="#baseline"/></svg><b>0</b>像素<em>▼</em></span><span><svg><use href="#tsume"/></svg><b>0</b><small>%</small><em>▼</em></span>
      </div>
      <div class="faces"><button class="fb">T</button><button class="fi">T</button><button>TT</button><button>T<small>T</small></button><button>T<sup>1</sup></button><button>T<sub>1</sub></button></div>
      <div class="checks"><label class="check"><input type="checkbox">连字</label><label class="check"><input type="checkbox">印地语数字</label></div>
    </section>
    <section class="panel aligner">
      <div class="tabs"><div class="tab dim clip-l">跟踪器</div><div class="tab on"><span>对齐</span><svg class="burger"><use href="#menu"/></svg></div><div class="tab dim clip-r">段落</div><svg class="more"><use href="#more"/></svg></div>
      <label class="to">将图层对齐到:<select disabled><option>选区</option></select></label>
      <div class="aicons"><svg><use href="#alL"/></svg><svg><use href="#alC"/></svg><svg><use href="#alR"/></svg><svg><use href="#alT"/></svg><svg><use href="#alM"/></svg><svg><use href="#alB"/></svg></div>
      <div class="dist">分布图层:</div>
      <div class="aicons low"><svg><use href="#diT"/></svg><svg><use href="#diC"/></svg><svg><use href="#diB"/></svg><svg><use href="#dhL"/></svg><svg><use href="#dhC"/></svg><svg><use href="#dhR"/></svg></div>
    </section>
  </aside>
</main>

<div class="popup" role="menu">
  <button>组（空）</button><hr>
  <button>矩形</button><button>椭圆</button><button>多边星形</button><button>路径</button><hr>
  <button>填充</button><button>描边</button><button>渐变填充</button><button>渐变描边</button><hr>
  <button class="hot">合并路径</button><button>位移路径</button><button>收缩和膨胀</button><button>中继器</button><button>圆角</button><button>修剪路径</button><button>扭转</button><button>摆动路径</button><button>摆动变换</button><button>Z 字形</button>
</div>
</body>
</html>
```
FILE: styles.css
```css
* { box-sizing: border-box; }
body {
  margin: 0; min-height: 100vh; display: flex; flex-direction: column; overflow: hidden;
  background: #161616; color: #b4b4b4;
  font: 13px/16px "Noto Sans CJK SC", "Noto Sans", sans-serif;
}
.sprite { position: absolute; width: 0; height: 0; }
svg { display: block; flex: none; }
button, select, input { font: inherit; color: inherit; margin: 0; padding: 0; border: 0; background: none; border-radius: 0; outline: 0; }
button { display: flex; align-items: center; white-space: nowrap; }
i { font-style: normal; }
h2 { margin: 0; }
.blue { color: #2d8ceb; }
.dim { color: #858585; }
.burger { width: 10px; height: 10px; }
.more { width: 12px; height: 10px; color: #b4b4b4; }
.sep { flex: none; width: 2px; height: 21px; background: #191919; }
.x { color: #8a8a8a; font-size: 10px; width: 7px; }

select {
  appearance: none; height: 20px; padding: 0 18px 0 7px; border: 1px solid #303030; border-radius: 3px; color: #b4b4b4; overflow: hidden;
  background: #181818 url("data:image/svg+xml,%3Csvg xmlns='http://www.w3.org/2000/svg' width='9' height='6'%3E%3Cpath d='M.5.5l4 4 4-4' fill='none' stroke='%239a9a9a'/%3E%3C/svg%3E") no-repeat right 4px center;
}
input[type=checkbox] { appearance: none; flex: none; width: 14px; height: 14px; border: 2px solid #8c8c8c; border-radius: 2px; }
input[type=radio] { appearance: none; flex: none; width: 14px; height: 14px; border: 2px solid #8c8c8c; border-radius: 50%; }
input[type=radio]:checked { background: #8c8c8c; border: 1px solid #232323; }
input[type=range] { appearance: none; min-width: 0; height: 16px; }
input[type=range]::-webkit-slider-runnable-track { height: 2px; background: #434343; }
input[type=range]::-webkit-slider-thumb { appearance: none; width: 14px; height: 14px; margin-top: -6px; border: 2px solid #8c8c8c; border-radius: 50%; background: #232323; box-shadow: 0 0 0 2px #232323; }
.check { display: flex; align-items: center; gap: 5px; color: #8c8c8c; }

.menubar { display: flex; gap: 15px; height: 19px; padding-left: 6px; background: #fff; border-bottom: 2px solid #f0f0f0; color: #000; font: 12px/17px "Open Sans", "Noto Sans CJK SC", sans-serif; }

.toolbar { display: flex; align-items: center; height: 25px; margin-bottom: 4px; background: #232323; }
.tools { display: flex; align-items: center; width: 453px; height: 25px; padding-left: 10px; border-right: 2px solid #303030; }
.tools .sep { margin: 0 3px 0 2px; background: #303030; }
.tool { justify-content: center; width: 25px; height: 23px; position: relative; }
.tool svg { width: 20px; height: 20px; }
.tool.active { background: #161616; color: #2d8ceb; border-radius: 3px; }
.tool.corner::after { content: ""; position: absolute; right: 2px; bottom: 2px; border: 2px solid transparent; border-right-color: #999; border-bottom-color: #999; }
.snap { display: flex; align-items: center; margin-left: 33px; }
.ico16 svg { width: 16px; height: 16px; }
.snap .check { margin-right: 28px; }
.snap .blue { margin-left: 8px; }
.spaces { display: flex; align-items: center; gap: 46px; margin-left: auto; height: 25px; padding: 0 10px 0 22px; border-left: 2px solid #191919; color: #858585; }
.spaces .blue { gap: 12px; margin-right: -22px; }
.spaces .light { margin-left: -7px; color: #b4b4b4; }
.prefs { height: 25px; padding: 0 11px 0 4px; border-left: 2px solid #303030; }
.prefs svg { width: 19px; height: 12px; }
.help { display: flex; align-items: center; gap: 10px; width: 194px; height: 19px; margin-right: 2px; padding-left: 5px; background: #181818; border: 1px solid #303030; border-radius: 3px; }
.help svg { width: 13px; height: 13px; }
.help input { width: 150px; font-size: 12px; }
::placeholder { color: #c0c0c0; opacity: 1; }

.workspace { flex: 1; display: flex; gap: 4px; }
.main { flex: 1; min-width: 0; display: flex; flex-direction: column; gap: 4px; }
.upper { height: 718px; display: flex; gap: 4px; }
.panel { background: #232323; display: flex; flex-direction: column; overflow: hidden; }
.tabs { display: flex; height: 26px; }
.tab { display: flex; align-items: center; height: 26px; padding-top: 1px; white-space: nowrap; border-bottom: 2px solid transparent; }
.tab.on { border-color: #b4b4b4; }

.queue { width: 188px; }
.queue .tabs { padding-left: 50px; }
.queue .tab .x { width: 17px; padding-left: 1px; }
.queue .tab .burger { margin-left: 9px; }
.queue .more { margin: 8px 3px 0 auto; }
.progress { height: 8px; margin: 8px 0 21px 9px; border-radius: 4px; background: #1e1e1e; }
.current { display: flex; gap: 4px; padding-left: 9px; font-size: 12px; }
.now { flex: none; width: 147px; height: 18px; gap: 9px; padding-left: 2px; background: #1a1a1a; border-radius: 3px; color: #c0c0c0; }
.now svg { width: 9px; height: 9px; }
.ame { flex: none; height: 18px; width: 60px; padding-left: 6px; border-radius: 9px; background: #2a2a2a; color: #454545; font-size: 11px; }
.qtable { margin: 7px 0 0 1px; width: 187px; height: 20px; border-spacing: 0; background: #303030; border-top: 1px solid #000; border-bottom: 1px solid #000; table-layout: fixed; }
.qtable th { padding: 0 0 0 5px; font-weight: 400; text-align: left; border-left: 2px solid #191919; white-space: nowrap; }
.c0 { width: 15px; padding: 0; } .c1 { width: 45px; } .c2 { width: 21px; } .c3 { width: 25px; }
.qtable .c2 { padding-left: 3px; }
.qtable .c3 { font-size: 11px; }
.qtable svg { width: 14px; height: 14px; }
.message { margin: auto 8px 1px 1px; height: 17px; padding-left: 10px; background: #1b1b1b; font-size: 12px; line-height: 17px; font-weight: 500; white-space: nowrap; overflow: hidden; color: #999; }

.comp { flex: 1; min-width: 0; }
.comp .tabs { padding-left: 11px; gap: 37px; }
.sw { flex: none; width: 15px; height: 15px; }
.sw.tan { width: 11px; height: 11px; background: #a89572; }
.comp .x { margin-right: 7px; }
.ulock { width: 12px; height: 14px; margin: 0 8px 0 9px; }
.comp b { font-weight: 400; color: #2d8ceb; }
.comp .tab .burger { margin-left: 10px; }
.crumb { height: 27px; padding: 4px 19px; border-bottom: 1px solid #000; }
.crumb button { width: 70px; height: 18px; padding-left: 9px; background: #161616; border: 1px solid #303030; border-radius: 3px; color: #2d8ceb; }
.viewer { flex: 1; display: flex; align-items: center; justify-content: center; padding-top: 2px; border-bottom: 1px solid #000; }
.stage { width: 540px; height: 540px; }
.viewbar { display: flex; align-items: center; height: 24px; padding-left: 1px; white-space: nowrap; }
.viewbar button { flex: none; width: 22px; height: 19px; justify-content: center; }
.viewbar svg { width: 14px; height: 14px; }
.viewbar svg.w16 { width: 16px; height: 16px; }
.viewbar select { flex: none; margin-right: 2px; }
.viewbar .num-sel { font-size: 11px; }
.w69 { width: 69px; }
.wres { width: 128px; }
.viewbar .wcam { width: 105px; padding-left: 6px; }
.viewbar .boxed { background: #161616; border-radius: 3px; }
.viewbar .frame { width: 69px; border: 1px solid #303030; border-radius: 3px; color: #8a8a8a; font-size: 11px; }
.viewbar .faint { color: #444; }
.viewbar .sep { background: #303030; }
.expo { color: #2d8ceb; font-size: 11px; margin-left: 1px; }

.scripts { width: 105px; display: flex; flex-direction: column; gap: 4px; }
.motion { height: 338px; }
.align-circle { flex: 1; }
.scripts h2 { display: flex; align-items: center; gap: 10px; height: 28px; padding-left: 13px; font-size: 11px; font-weight: 400; color: #c4c4c4; }
.group { flex: 1; margin: 0 1px 1px; border: 1px solid #333; border-radius: 3px; padding: 1px; font-size: 11px; }
.bar { width: 100%; height: 24px; padding-left: 7px; margin-bottom: 12px; background: #1b1b1b; border: 1px solid #303030; border-right: 0; border-radius: 3px; color: #b4b4b4; }
.slide { display: flex; align-items: center; height: 26px; padding-left: 6px; color: #d0d0d0; }
.slide svg { width: 12px; height: 12px; margin-right: 9px; }
.slide input { flex: 1; }
.acts { display: grid; grid-template-columns: 1fr 20px; padding: 6px 0 9px 7px; overflow: hidden; }
.acts button { height: 26px; gap: 4px; font: bold 9px/12px "DejaVu Sans", sans-serif; color: #c8c8c8; text-shadow: 0 0 1px #000, 1px 1px 0 #000; }
.acts svg { width: 14px; height: 14px; }
.acts .wide { width: 18px; height: 16px; }

.align-circle .group { padding: 4px 2px; }
fieldset { display: flex; align-items: flex-start; min-width: 0; height: 31px; margin: 0 0 3px; padding: 0 1px; border: 1px solid #303030; border-radius: 3px; color: #8c8c8c; }
legend { margin-left: 5px; padding: 0 6px; line-height: 12px; height: 12px; white-space: nowrap; }
fieldset label, .pair label { display: flex; align-items: center; gap: 3px; height: 12px; line-height: 12px; }
fieldset label + label { margin-left: 7px; }
fieldset input[type=range] { width: 40px; }
fieldset input[type=text] { width: 45px; height: 18px; margin-left: 7px; padding-left: 5px; background: #161616; border: 1px solid #303030; border-radius: 3px; color: #b4b4b4; }
fieldset input[type=range]::-webkit-slider-thumb { width: 16px; height: 16px; margin-top: -7px; }
.two label, .pair label { width: 47px; }
.two label + label { margin-left: 0; width: 44px; }
.tall { flex-wrap: wrap; height: 64px; align-content: flex-start; margin-bottom: 1px; }
.inner { width: 93px; height: 31px; margin: 9px 0 0; border-color: #2c2c2c; color: #444; }
.inner input[type=text] { width: 43px; margin-left: 4px; background: #292929; border-color: #292929; color: #444; }
.inner input[type=range]::-webkit-slider-thumb { border-color: #444; }
.pair { display: flex; align-items: center; height: 27px; padding: 0 1px 3px; border: 1px solid #303030; border-radius: 3px; color: #8c8c8c; }
.go { display: flex; justify-content: space-between; margin-top: 1px; color: #8c8c8c; }
.go button { width: 25px; height: 20px; justify-content: center; border: 1px solid #777; border-radius: 1px; }
.go button:first-child { width: 27px; font-size: 10px; }
.go .sym { font: 10px/16px "DejaVu Sans", sans-serif; }

.timeline { flex: 1; display: flex; flex-direction: column; background: #232323; border: 1px solid #2d8ceb; border-bottom: 0; }
.tbody { flex: 1; display: flex; border-bottom: 1px solid #000; }
.tleft { width: 675px; border-right: 1px solid #000; }
.ttab { display: flex; align-items: center; height: 26px; padding-left: 9px; }
.ttab .sw { margin: 0 12px 0 9px; }
.ttab .burger { margin-left: 9px; }
.ttop { display: flex; align-items: center; height: 36px; padding-left: 10px; }
.time { width: 142px; display: flex; flex-direction: column; }
.time strong { font-size: 14px; line-height: 16px; color: #2d8ceb; padding-left: 44px; }
.time small { font: 10px/14px "Liberation Mono", monospace; color: #205590; }
.tsearch { display: flex; align-items: center; width: 320px; height: 20px; padding-left: 6px; background: #161616; border: 1px solid #303030; border-radius: 3px; }
.tsearch svg { width: 18px; height: 14px; }
.tsearch input { flex: 1; }
.i18 { margin-left: 15px; }
.i18 svg { width: 18px; height: 18px; }
.row { display: flex; align-items: center; height: 20px; border-bottom: 1px solid #1a1a1a; }
.row.head { background: #333; border-top: 1px solid #000; border-bottom: 1px solid #000; }
.av { display: flex; align-items: center; flex: none; width: 68px; }
.head .av { gap: 2px; padding-left: 4px; border-right: 2px solid #161616; }
.head svg { width: 13px; height: 13px; }
.dot { width: 8px; height: 8px; margin: 0 3px; border-radius: 50%; background: #b4b4b4; }
.bl { border-left: 2px solid #161616; padding-left: 5px; line-height: 15px; }
.htag { width: 32px; padding-left: 13px; }
.head .num { width: 32px; font-size: 11px; }
.hname { width: 244px; }
.tcol { margin: 0 10px 0 49px; }
.head .tcol, .tcol + span { font-size: 11px; color: #999; }
.layer { background: #2e2e2e; }
.cell { display: flex; align-items: center; justify-content: center; flex: none; width: 14px; height: 14px; margin-right: 1px; background: #242424; }
.av .cell:first-child { margin-left: 4px; background: #1d1d1d; }
.av .off { margin-left: 15px; }
.av .cell svg { width: 12px; height: 12px; color: #c8c8c8; }
.tw { width: 10px; height: 10px; margin: 0 4px 0 3px; color: #999; }
.violet { background: #667cdc; }
.red { background: #b63838; }
.num { width: 32px; padding-left: 6px; font-size: 12px; font-weight: 500; color: #999; }
.li { width: 14px; height: 14px; margin: 0 8px 0 4px; }
.sky { width: 17px; height: 17px; margin: 0 6px 0 3px; background: #b9e2ff; border: 1px solid #000; }
.name { width: 220px; font-size: 12px; font-weight: 700; color: #999; }
.layer select { width: 69px; height: 18px; border: 0; }
.layer .t { margin: 0 6px 0 5px; }
.layer .t + select { width: 64px; padding-left: 6px; }
.layer .spiral + select { width: 89px; padding-left: 6px; }
.spiral { width: 13px; height: 13px; margin: 0 7px 0 9px; }
.sub { background: #272727; }
.sub .d1 { margin: 0 11px 0 24px; }
.sub .d2 { margin: 0 13px 0 42px; }
.prop { font-size: 11px; color: #999; flex: 1; }
.sub select.long { width: 156px; height: 19px; margin-right: 138px; border-radius: 0; background-color: #1d1d1d; padding-left: 6px; }
.adder { display: flex; align-items: center; gap: 4px; margin-right: 137px; font-size: 11px; color: #999; }
.adder svg { width: 12px; height: 12px; }
.reset { width: 293px; color: #2d8ceb; font-size: 11px; font-weight: 700; }

.tright { flex: 1; min-width: 0; display: flex; flex-direction: column; padding-left: 1px; padding-top: 33px; overflow: hidden; }
.nav { flex: none; height: 8px; padding: 0 0 0 6px; }
.nav i { display: block; height: 8px; background: #666; border-right: 6px solid #2d8ceb; border-radius: 0 4px 4px 0; }
.ruler { flex: none; display: grid; grid-template-columns: repeat(9, 1fr); height: 20px; margin: 0 -20px 0 -21px; font: 11px/14px "Liberation Serif", serif; color: #999; text-align: center; }
.ruler span { height: 20px; background: linear-gradient(#888, #888) center bottom / 1px 5px no-repeat; }
.work { flex: none; display: flex; height: 21px; padding: 0 2px 0 6px; border-top: 1px solid #000; border-bottom: 1px solid #000; }
.work i { flex: 1; height: 18px; background: linear-gradient(#5f5f5f 14px, #000 14px, #000 15px, #00c020 15px); }
.work b { width: 5px; height: 15px; background: #2d8ceb; border-radius: 0 4px 4px 0; }
.tracks { flex: 1; position: relative; background: linear-gradient(#323232, #323232) no-repeat 0 0 / calc(100% - 7px) 100%, #2a2a2a; }
.track { height: 20px; padding: 0 7px 0 6px; border-bottom: 1px solid #202020; }
.track:has(svg) { display: flex; align-items: center; }
.track svg { width: 9px; height: 12px; margin-left: -4px; color: #aaa; }
.clip { display: block; height: 18px; border: 1px solid #444; border-width: 1px 0; }
.clip.violet { background: #505b8c; }
.clip.red { background: #7b3838; }
.playhead { position: absolute; left: 6px; top: 0; bottom: 0; width: 1px; background: #2d8ceb; }
.gutter { flex: none; width: 17px; padding: 64px 2px 0 3px; }
.gutter svg { width: 12px; height: 14px; margin-bottom: 7px; }
.gutter svg + svg { width: 14px; margin-left: -3px; }
.tfoot { display: flex; align-items: flex-start; height: 14px; padding: 1px 0 0 5px; overflow: hidden; }
.tfoot svg { width: 13px; height: 13px; }
.tfoot > button { width: 18px; height: 14px; }
.tfoot .modes { flex: none; width: 164px; height: 16px; margin: 0 139px 0 318px; justify-content: center; background: #1e1e1e; border: 1px solid #303030; border-radius: 3px; font-size: 12px; line-height: 14px; color: #999; }
.tfoot input { width: 50px; margin: 0 10px; }
.tfoot input::-webkit-slider-thumb { width: 10px; height: 10px; margin-top: -4px; }
.tfoot .small { width: 10px; height: 12px; }
.tfoot .big { width: 17px; height: 13px; }

.side { width: 204px; display: flex; flex-direction: column; gap: 4px; flex: none; }
.info { height: 142px; }
.info .tabs, .preview .tabs { padding-left: 11px; }
.info .tab, .preview .tab { padding-left: 2px; gap: 9px; }
.info .tab .burger, .preview .tab .burger { margin-left: 1px; }
.info .tab.dim { margin-left: 21px; }
.infobody { display: flex; height: 67px; margin: 0 7px 0 6px; padding: 7px 0 0 2px; border-bottom: 2px solid #303030; font-size: 11px; line-height: 13px; color: #858585; }
.blk { width: 20px; height: 20px; margin: 12px 6px 0 0; background: #000; }
dl { display: grid; grid-template-columns: 18px 1fr; align-content: start; margin: 0; }
dl:first-of-type { width: 69px; grid-template-rows: repeat(4, 13px); border-right: 2px solid #303030; height: 52px; }
dd { margin: 0; }
.cross { width: 10px; height: 10px; margin: 22px 3px 0 9px; }
.preview { height: 56px; }
.preview .tabs { height: 28px; }
.transport { display: flex; gap: 10px; padding: 9px 0 0 46px; }
.transport svg { width: 14px; height: 10px; }
.char { height: 512px; }
.char .tab.on { margin-left: 43px; gap: 10px; padding-left: 1px; padding-right: 0; }
.char .more { margin: 8px 1px 0 auto; }
.fonts { display: flex; gap: 5px; margin: 0 5px; height: 59px; padding-top: 10px; border-bottom: 2px solid #303030; }
.fsel { flex: none; display: grid; gap: 4px; width: 122px; align-content: start; }
.fmid { flex: none; width: 20px; display: grid; gap: 6px; align-content: start; }
.fmid svg { width: 18px; height: 19px; }
.bw { height: 17px; background: linear-gradient(#000 50%, #fff 50%); border: 1px solid #999; }
.paint { width: 43px; height: 43px; }
.nums { display: grid; grid-template-columns: 88px 1fr; column-gap: 18px; margin: 0 5px; padding: 3px 0 5px; border-bottom: 2px solid #303030; color: #858585; }
.nums span { display: flex; align-items: center; gap: 7px; height: 20px; white-space: nowrap; }
.nums svg { width: 18px; height: 17px; }
.nums b { color: #2d8ceb; font-weight: 400; font-size: 11px; }
.nums b.han { font-size: 13px; }
.nums small { font-size: 11px; }
.nums em { margin-left: auto; font: 8px/10px "DejaVu Sans", sans-serif; }
.nums span.off { color: #444; gap: 8px; }
.off em, .off svg { color: #858585; }
.off em { margin-left: -8px; }
.nums.one { column-gap: 1px; padding: 4px 0 6px; }
.nums.one select { width: 106px; }
.nums svg { color: #b4b4b4; }
.faces { display: grid; grid-template-columns: repeat(6, 27px); padding: 5px 0 0 24px; font: 15px/20px "Liberation Serif", serif; height: 30px; }
.faces button { display: block; text-align: center; }
.faces .fb { font-weight: 700; }
.faces .fi { font-style: italic; }
.faces small, .faces sup, .faces sub { font-size: 10px; line-height: 8px; }
.checks { display: flex; gap: 52px; padding: 5px 11px; }
.checks .check { white-space: nowrap; }

.aligner { flex: 1; }
.aligner .tab.on { margin-left: 40px; padding-left: 2px; gap: 10px; }
.clip-l { width: 36px; direction: rtl; overflow: hidden; }
.clip-l, .clip-r { display: block; line-height: 26px; }
.clip-r { width: 19px; margin-left: 25px; overflow: hidden; }
.aligner .more { margin: 8px 1px 0 auto; }
.to { display: flex; align-items: center; gap: 2px; padding: 4px 0 0 8px; color: #858585; white-space: nowrap; }
.to select { flex: 1; min-width: 0; height: 18px; background-color: #282828; background-image: url("data:image/svg+xml,%3Csvg xmlns='http://www.w3.org/2000/svg' width='9' height='6'%3E%3Cpath d='M.5.5l4 4 4-4' fill='none' stroke='%23444'/%3E%3C/svg%3E"); border: 0; color: #444; opacity: 1; }
.aicons { display: flex; gap: 16px; padding: 6px 11px 5px; color: #3f3f3f; }
.aicons svg { width: 18px; height: 18px; }
.aicons.low { padding-top: 3px; }
.dist { margin: 0 5px 0 6px; padding-left: 2px; border-top: 2px solid #303030; color: #858585; }

.popup { position: absolute; left: 538px; top: 429px; width: 150px; padding: 2px; background: #f0f0f0; border: 1px solid #ccc; box-shadow: 3px 3px 3px rgba(0,0,0,.5); color: #000; font-size: 12px; line-height: 14px; }
.popup button { width: 100%; height: 22px; padding-left: 32px; }
.popup .hot { background: #91c9f7; }
.popup hr { height: 1px; margin: 3px 0 3px 28px; border: 0; background: #d0d0d0; }
```
